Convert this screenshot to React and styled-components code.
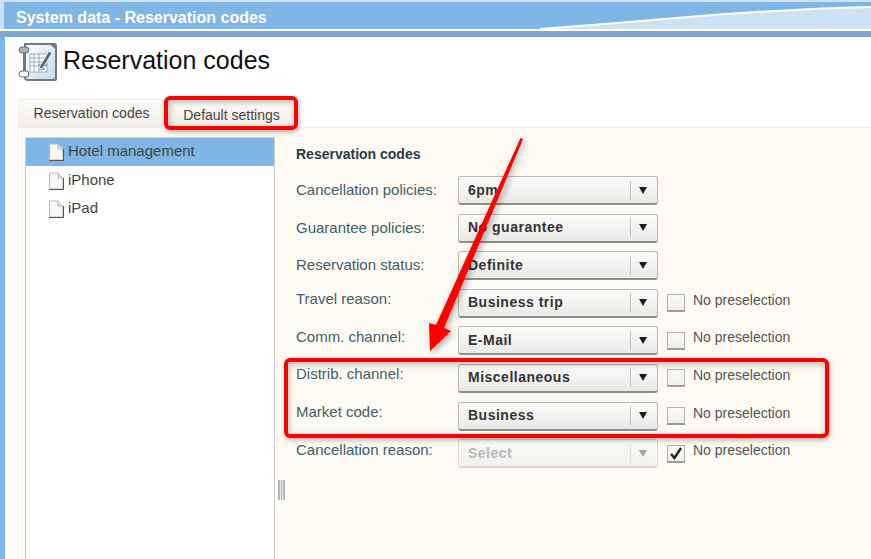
import React from 'react';
import styled, { createGlobalStyle } from 'styled-components';

const blue = "#7fb6e5";
const paleBlue = "#cfe2f3";
const cream = "#fdfaf3";
const red = "#ff0000";

const GlobalStyle = createGlobalStyle`
    html, body {
        margin: 0;
        padding: 0;
        background: #ffffff;
        font-family: "Liberation Sans", Arial, sans-serif;
    }
`;

const Page = styled.div`
    position: relative;
    width: 871px;
    height: 559px;
    overflow: hidden;
    display: flex;
    flex-direction: column;
    background: ${paleBlue};
`;

const TitleBar = styled.div`
    position: relative;
    flex: none;
    height: 27px;
    box-sizing: border-box;
    margin: 2px 0 0 4px;
    padding: 4px 0 0 12px;
    display: flex;
    align-items: center;
    background: ${blue};
    color: #ffffff;
    font-size: 16px;
    font-weight: bold;
`;

const TitleText = styled.span`
    position: relative;
`;

const Wave = styled.svg`
    position: absolute;
    left: -4px;
    top: 0;
`;

const TitleRule = styled.div`
    flex: none;
    height: 2px;
    background: #ffffff;
`;

const SubBar = styled.div`
    flex: none;
    height: 6px;
    background: #80a8cf;
`;

const Body = styled.div`
    flex: 1;
    min-height: 0;
    border-left: 5px solid ${blue};
    background: #ffffff;
    display: flex;
    flex-direction: column;
`;

const Heading = styled.div`
    flex: none;
    height: 62px;
    padding: 5px 0 0 13px;
    display: flex;
    align-items: flex-start;
    gap: 5px;
    box-sizing: border-box;
    color: #111111;
    font-size: 25px;
    line-height: 37px;
`;

const Tabs = styled.div`
    flex: none;
    height: 28px;
    padding-left: 13px;
    display: flex;
    gap: 2px;
`;

const Tab = styled.div`
    width: ${p => p.$width}px;
    box-sizing: border-box;
    display: flex;
    align-items: center;
    justify-content: center;
    padding: ${p => p.$active ? "0 0 2px 2px" : "2px 0 0"};
    border: 1px solid #f3eee2;
    border-bottom: none;
    border-radius: 3px 3px 0 0;
    background: linear-gradient(#fdfcf9, #f1eee7);
    color: #444444;
    font-size: 14px;
`;

const Panel = styled.div`
    flex: 1;
    min-height: 0;
    margin-left: 12px;
    padding: 9px 0 0 7px;
    display: flex;
    border-top: 1px solid #f3eee2;
    border-left: 1px solid #f6efe0;
    background: ${cream};
`;

const Tree = styled.div`
    flex: none;
    width: 250px;
    box-sizing: border-box;
    border-left: 1px solid #cccccc;
    border-right: 1px solid #cccccc;
    border-top: 1px solid #c8d8e6;
    background: #ffffff;
`;

const TreeRow = styled.div`
    height: 28px;
    box-sizing: border-box;
    padding: ${p => p.$selected ? "0 0 3px 22px" : "0 0 2px 22px"};
    display: flex;
    align-items: center;
    gap: 4px;
    background: ${p => p.$selected ? blue : "transparent"};
    color: #444444;
    font-size: 15px;
`;

const PageGlyph = styled.svg`
    flex: none;
    margin-top: 3px;
`;

const Splitter = styled.div`
    flex: none;
    width: 21px;
    padding: 343px 0 0 3px;
    box-sizing: border-box;
`;

const Grip = styled.div`
    width: 7px;
    height: 20px;
    box-sizing: border-box;
    border-left: 1px solid #b5b5b5;
    border-right: 1px solid #b5b5b5;
    background: repeating-linear-gradient(90deg, #b5b5b5 0 1px, #eeeeee 1px 2px);
`;

const Form = styled.div`
    flex: none;
    width: 530px;
`;

const FormTitle = styled.div`
    height: 39px;
    padding-top: 9px;
    box-sizing: border-box;
    color: #1f4048;
    font-size: 14px;
    font-weight: bold;
`;

const Row = styled.div`
    height: 37.6px;
    display: grid;
    grid-template-columns: 162px 200px auto;
    align-items: start;
`;

const Label = styled.div`
    padding-top: ${p => p.$raised ? 1.5 : 5}px;
    color: #3f5f68;
    font-size: 15px;
    line-height: 18px;
    white-space: nowrap;
`;

const Select = styled.div`
    height: 29px;
    box-sizing: border-box;
    display: flex;
    align-items: center;
    border: 1px solid ${p => p.$disabled ? "#dcdcd6" : "#b9b9b5"};
    border-bottom: 2px solid ${p => p.$disabled ? "#d8d8d2" : "#8f8f8b"};
    border-radius: 3px;
    background: ${p => p.$disabled
        ? "linear-gradient(#f9f8f4, #f1f0ec)"
        : "linear-gradient(#fbfbf9, #e9e9e7)"};
`;

const SelectText = styled.div`
    flex: 1;
    padding: 0 0 1px 9px;
    color: ${p => p.$disabled ? "#b3bcbc" : "#333333"};
    font-size: 14px;
    font-weight: bold;
    letter-spacing: 0.5px;
`;

const SelectDivider = styled.div`
    width: 1px;
    height: 19px;
    background: ${p => p.$disabled ? "#dededa" : "#c4c4c0"};
`;

const Caret = styled.div`
    width: 26px;
    box-sizing: border-box;
    padding-right: 2px;
    display: flex;
    justify-content: center;
    &::after {
        content: "";
        border-left: 4px solid transparent;
        border-right: 4px solid transparent;
        border-top: 7px solid ${p => p.$disabled ? "#9aa6a8" : "#1c1c1c"};
    }
`;

const Preselect = styled.label`
    margin-left: 9px;
    display: flex;
    align-items: flex-start;
    gap: 8px;
    color: #555555;
    font-size: 14px;
    line-height: 18px;
`;

const Check = styled.span`
    width: 18px;
    height: 18px;
    margin-top: 5.5px;
    box-sizing: border-box;
    display: flex;
    border: 1px solid #b0b0ac;
    border-bottom: 2px solid #9c9c98;
    background: linear-gradient(#fbfaf7, #efeeea);
`;

const PreselectText = styled.span`
    padding-top: 2px;
`;

const Callout = styled.div`
    position: absolute;
    box-sizing: border-box;
    left: ${p => p.$x}px;
    top: ${p => p.$y}px;
    width: ${p => p.$w}px;
    height: ${p => p.$h}px;
    border: 4px solid ${red};
    border-radius: 6px;
    box-shadow: 1px 2px 5px rgba(0, 0, 0, 0.3), inset 1px 2px 6px rgba(0, 0, 0, 0.28);
`;

const ArrowLayer = styled.svg`
    position: absolute;
    left: 0;
    top: 0;
    filter: drop-shadow(2px 2px 3px rgba(0, 0, 0, 0.35));
`;

const rows = [
    { label: "Cancellation policies:", value: "6pm" },
    { label: "Guarantee policies:", value: "No guarantee" },
    { label: "Reservation status:", value: "Definite" },
    { label: "Travel reason:", value: "Business trip", raised: true, pre: true },
    { label: "Comm. channel:", value: "E-Mail", raised: true, pre: true },
    { label: "Distrib. channel:", value: "Miscellaneous", raised: true, pre: true },
    { label: "Market code:", value: "Business", raised: true, pre: true },
    { label: "Cancellation reason:", value: "Select", raised: true, pre: true, disabled: true, checked: true },
];

const NotebookIcon = () => (
    <svg width="40" height="40" viewBox="0 0 40 40">
        <defs>
            <linearGradient id="book" x1="0" y1="0" x2="1" y2="1">
                <stop offset="0" stopColor="#ffffff" />
                <stop offset="1" stopColor="#c4d9ec" />
            </linearGradient>
        </defs>
        <path d="M6 1H36Q39 1 39 4V37Q39 39 37 39H10Q6 39 6 35Z" fill="#6d7b85" />
        <path d="M8 3H33L37 7V35Q37 37 35 37H10Q8 37 8 35Z" fill="url(#book)" />
        <path d="M6 6V33" stroke="#6d7b85" strokeWidth="2" />
        <rect x="1" y="5" width="10" height="6" rx="3" fill="#aab3ba" stroke="#5c6c76" />
        <rect x="1" y="29" width="10" height="6" rx="3" fill="#ffffff" stroke="#5c6c76" />
        <path d="M12 12H29V30H12Z" fill="#ffffff" stroke="#9aabb7" />
        <path d="M12 16H29M12 20H29M12 24H29M16 12V30M21 12V30" stroke="#9aabb7" strokeWidth="1" />
        <path d="M20 23H29M20 27H27" stroke="#4f9be0" strokeWidth="1.500" />
        <path d="M22 24L31 9L34 11L25 26L21 27Z" fill="#59646c" stroke="#ffffff" strokeWidth="0.800" />
    </svg>
);

const PageIcon = () => (
    <PageGlyph width="16" height="18" viewBox="0 0 16 18">
        <path d="M1.500 1H10L15 6V17H1.500Z" fill="#f8f8f6" stroke="#b8b8b8" />
        <path d="M1 17.500H15.500V6" fill="none" stroke="#555555" strokeWidth="1" />
        <path d="M10 1V6H15" fill="#e4e4e0" stroke="#a8a8a8" strokeWidth="0.800" />
    </PageGlyph>
);

const CheckMark = () => (
    <svg width="16" height="15" viewBox="0 0 16 15">
        <path d="M3 8L6.500 12L13 2" fill="none" stroke="#222222" strokeWidth="2.400" />
    </svg>
);

const App = () => (
    <Page>
        <GlobalStyle />
        <TitleBar>
            <Wave width="871" height="27" viewBox="0 0 871 27">
                <path d="M540 27Q620 21 700 14Q790 7 871 5V27Z" fill={paleBlue} />
                <path d="M540 27Q620 21 700 14Q790 7 871 5" fill="none" stroke="#ffffff" strokeWidth="2" />
            </Wave>
            <TitleText>System data - Reservation codes</TitleText>
        </TitleBar>
        <TitleRule />
        <SubBar />
        <Body>
            <Heading>
                <NotebookIcon />
                Reservation codes
            </Heading>
            <Tabs>
                <Tab $width={145} $active>Reservation codes</Tab>
                <Tab $width={133}>Default settings</Tab>
            </Tabs>
            <Panel>
                <Tree>
                    <TreeRow $selected><PageIcon />Hotel management</TreeRow>
                    <TreeRow><PageIcon />iPhone</TreeRow>
                    <TreeRow><PageIcon />iPad</TreeRow>
                </Tree>
                <Splitter><Grip /></Splitter>
                <Form>
                    <FormTitle>Reservation codes</FormTitle>
                    {rows.map(r => (
                        <Row key={r.label}>
                            <Label $raised={r.raised}>{r.label}</Label>
                            <Select $disabled={r.disabled}>
                                <SelectText $disabled={r.disabled}>{r.value}</SelectText>
                                <SelectDivider $disabled={r.disabled} />
                                <Caret $disabled={r.disabled} />
                            </Select>
                            {r.pre && (
                                <Preselect>
                                    <Check>{r.checked && <CheckMark />}</Check>
                                    <PreselectText>No preselection</PreselectText>
                                </Preselect>
                            )}
                        </Row>
                    ))}
                </Form>
            </Panel>
        </Body>
        <Callout $x={163.500} $y={96} $w={134.500} $h={34} />
        <Callout $x={284} $y={357.500} $w={544.500} $h={80} />
        <ArrowLayer width="871" height="559" viewBox="0 0 871 559">
            <path d="M520.500 138L523 139L444 328L451 331L430 351L429 323L436 325Z" fill={red} />
        </ArrowLayer>
    </Page>
);

export default App;
